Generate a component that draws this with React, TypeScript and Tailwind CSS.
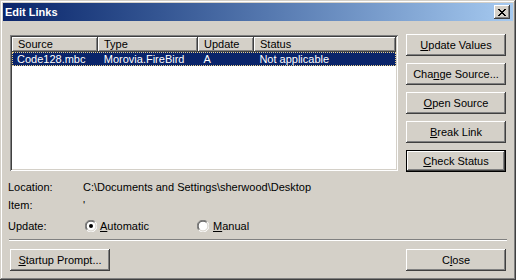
import React from 'react';

const raised =
  'shadow-[inset_-1px_-1px_#404040,inset_1px_1px_#ffffff,inset_-2px_-2px_#808080,inset_2px_2px_#d4d0c8]';
const sunken =
  'shadow-[inset_1px_1px_#808080,inset_-1px_-1px_#ffffff,inset_2px_2px_#404040,inset_-2px_-2px_#d4d0c8]';

const Key: React.FC<{ children: React.ReactNode }> = ({ children }) => (
  <span className="underline decoration-1 underline-offset-[1px]">{children}</span>
);

const Btn: React.FC<{ children: React.ReactNode; def?: boolean; className?: string }> = ({
  children,
  def,
  className = '',
}) => (
  <div
    className={`h-[22px] w-[100px] flex items-center justify-center bg-[#d4d0c8] text-black ${
      def ? 'border border-black shadow-[inset_-1px_-1px_#404040,inset_1px_1px_#ffffff,inset_-2px_-2px_#808080]' : raised
    } ${className}`}
  >
    <span className="leading-[13px]">{children}</span>
  </div>
);

const CloseGlyph = () => {
  const px: [number, number][] = [];
  const rows = ['XX....XX', '.XX..XX.', '..XXXX..', '...XX...', '..XXXX..', '.XX..XX.', 'XX....XX'];
  rows.forEach((r, y) => r.split('').forEach((c, x) => c === 'X' && px.push([x, y])));
  return (
    <svg width="8" height="7" viewBox="0 0 8 7" shapeRendering="crispEdges">
      {px.map(([x, y]) => (
        <rect key={`${x}-${y}`} x={x} y={y} width="1" height="1" fill="#000" />
      ))}
    </svg>
  );
};

const Radio: React.FC<{ checked?: boolean }> = ({ checked }) => (
  <svg width="12" height="12" viewBox="0 0 12 12">
    <circle cx="6" cy="6" r="5.5" fill="#fff" />
    <path d="M1.8 10.2 A5.5 5.5 0 0 1 10.2 1.8" fill="none" stroke="#808080" strokeWidth="1" />
    <path d="M10.2 1.8 A5.5 5.5 0 0 1 1.8 10.2" fill="none" stroke="#ffffff" strokeWidth="1" />
    <path d="M2.5 9.5 A4.5 4.5 0 0 1 9.5 2.5" fill="none" stroke="#404040" strokeWidth="1" />
    <path d="M9.5 2.5 A4.5 4.5 0 0 1 2.5 9.5" fill="none" stroke="#d4d0c8" strokeWidth="1" />
    {checked && <circle cx="6" cy="6" r="2" fill="#000" />}
  </svg>
);

const columns = [
  { name: 'Source', w: 'w-[86px]', value: 'Code128.mbc' },
  { name: 'Type', w: 'w-[100px]', value: 'Morovia.FireBird' },
  { name: 'Update', w: 'w-[56px]', value: 'A' },
  { name: 'Status', w: 'w-[142px]', value: 'Not applicable' },
];

export default function App() {
  return (
    <div className="w-[516px] h-[280px] bg-[#d4d0c8] p-[3px] flex flex-col text-[11px] text-black font-['Liberation_Sans',Arial,sans-serif] shadow-[inset_-1px_-1px_#404040,inset_1px_1px_#d4d0c8,inset_-2px_-2px_#808080,inset_2px_2px_#ffffff]">
      {/* title bar */}
      <div className="h-[18px] flex items-center justify-between pl-[2px] pr-[3px] bg-gradient-to-r from-[#0a246a] to-[#a6caf0]">
        <span className="font-bold text-white leading-[13px]">Edit Links</span>
        <div className={`w-[16px] h-[14px] bg-[#d4d0c8] flex items-center justify-center ${raised}`}>
          <CloseGlyph />
        </div>
      </div>

      <div className="flex flex-col px-[7px]">
        {/* list + buttons */}
        <div className="mt-[13px] flex gap-[8px]">
          <div className={`mt-[1px] w-[388px] h-[136px] bg-white p-[2px] ${sunken}`}>
            <div className="flex h-[15px]">
              {columns.map((c) => (
                <div key={c.name} className={`${c.w} bg-[#d4d0c8] pl-[6px] flex items-center ${raised}`}>
                  <span className="leading-[13px]">{c.name}</span>
                </div>
              ))}
            </div>
            <div className="flex h-[14px] bg-[#0a246a] text-white border border-dotted border-[#e8d08a]">
              {columns.map((c, i) => (
                <div key={c.name} className={`${c.w} ${i === 0 ? 'pl-[5px] -ml-px' : 'pl-[6px]'} flex items-center`}>
                  <span className="leading-[12px] whitespace-nowrap">{c.value}</span>
                </div>
              ))}
            </div>
          </div>
          <div className="flex flex-col gap-[7px]">
            <Btn>
              <Key>U</Key>pdate Values
            </Btn>
            <Btn>
              Cha<Key>n</Key>ge Source...
            </Btn>
            <Btn>
              <Key>O</Key>pen Source
            </Btn>
            <Btn>
              <Key>B</Key>reak Link
            </Btn>
            <Btn def>
              <Key>C</Key>heck Status
            </Btn>
          </div>
        </div>

        {/* details */}
        <div className="mt-[9px] flex h-[13px] items-center -ml-[2px]">
          <span className="w-[75px] leading-[13px]">Location:</span>
          <span className="leading-[13px]">C:\Documents and Settings\sherwood\Desktop</span>
        </div>
        <div className="mt-[5px] flex h-[13px] items-center -ml-[2px]">
          <span className="w-[75px] leading-[13px]">Item:</span>
          <span className="leading-[13px]">'</span>
        </div>
        <div className="mt-[7px] flex h-[14px] items-center -ml-[2px]">
          <span className="w-[77px] leading-[13px]">Update:</span>
          <div className="w-[112px] flex items-center gap-[3px]">
            <Radio checked />
            <span className="leading-[13px]">
              <Key>A</Key>utomatic
            </span>
          </div>
          <div className="flex items-center gap-[4px]">
            <Radio />
            <span className="leading-[13px]">
              <Key>M</Key>anual
            </span>
          </div>
        </div>

        {/* separator */}
        <div className="mt-[6px] mx-[-1px] h-[2px] border-t border-[#808080] border-b border-b-white" />

        {/* bottom buttons */}
        <div className="mt-[8px] flex justify-between">
          <Btn>
            <Key>S</Key>tartup Prompt...
          </Btn>
          <Btn>
            C<Key>l</Key>ose
          </Btn>
        </div>
      </div>
    </div>
  );
}
